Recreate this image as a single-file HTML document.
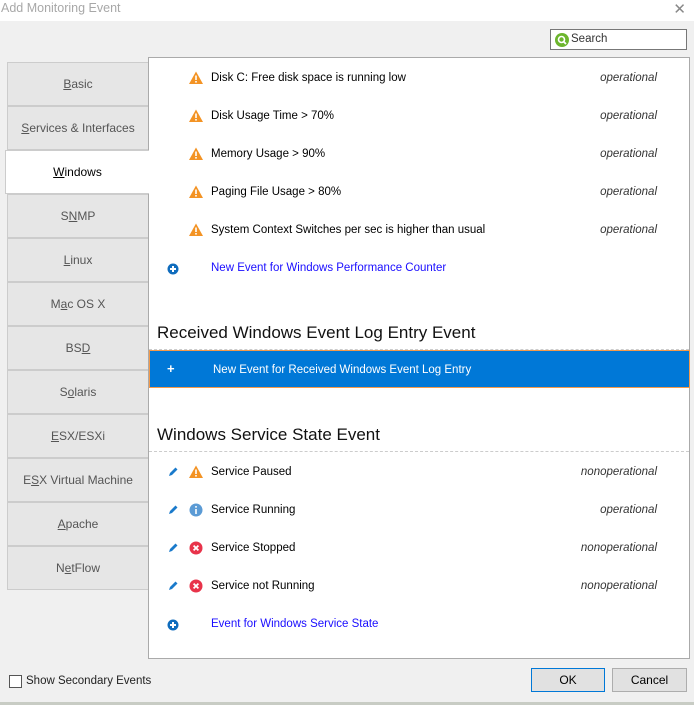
<!DOCTYPE html>
<html><head><meta charset="utf-8"><style>
*{margin:0;padding:0;box-sizing:border-box}
body{width:694px;height:705px;overflow:hidden;background:#f0f0f0;font-family:"Liberation Sans","DejaVu Sans",sans-serif;font-size:11.5px;color:#000;position:relative}
.title{position:absolute;left:0;top:0;width:694px;height:21px;background:#fff;color:#a8a8a8;font-size:12.5px;padding:1px 0 0 1px}
.x{position:absolute;right:8px;top:0px;color:#888;font-size:15px}
.search{position:absolute;left:550px;top:29px;width:137px;height:21px;border:1px solid #777;background:#fff;font-size:11.5px;color:#333;padding:3px 0 0 20px}
.search svg{position:absolute;left:4px;top:3px}
.tab{position:absolute;left:7px;width:141px;height:44px;background:#e6e6e6;border:1px solid #ccc;border-right:none;color:#555;text-align:center;line-height:43px;font-size:12px}
.tab.sel{background:#fff;color:#000;left:5px;width:144px;border-color:#ccc;z-index:2}
.panel{position:absolute;left:148px;top:57px;width:542px;height:602px;background:#fff;border:1px solid #aaa}
.row{position:absolute;left:0;width:540px;height:20px;font-size:11.5px}
.row .ic{position:absolute;left:40px;top:2px}
.row .ed{position:absolute;left:18px;top:3px}
.row .t{position:absolute;left:62px;top:3px}
.row .s{position:absolute;right:32px;top:3px;font-style:italic;color:#333}
.row .t.link{color:#1a0dff}
.hdr{position:absolute;left:8px;font-size:17px;color:#111}
.dash{position:absolute;left:0;width:540px;border-top:1px dashed #ccc}
.blue{position:absolute;left:0;top:292px;width:541px;height:38px;background:#0078d7;border:1px solid #f59a4a;color:#fff}
.btn{position:absolute;top:668px;height:24px;background:#e1e1e1;border:1px solid #adadad;text-align:center;line-height:22px;font-size:12px}
</style></head><body>
<div class="title">Add Monitoring Event<span class="x">✕</span></div>
<div class="search"><svg width="14" height="14" viewBox="0 0 14 14"><circle cx="7" cy="7" r="7" fill="#6cb52d"/><circle cx="6.5" cy="6.5" r="3" fill="none" stroke="#fff" stroke-width="1.6"/><path d="M8.5 8.5L11 11" stroke="#fff" stroke-width="1.8"/></svg>Search</div>

<div class="tab" style="top:62px"><u>B</u>asic</div>
<div class="tab" style="top:106px"><u>S</u>ervices &amp; Interfaces</div>
<div class="tab sel" style="top:150px"><u>W</u>indows</div>
<div class="tab" style="top:194px">S<u>N</u>MP</div>
<div class="tab" style="top:238px"><u>L</u>inux</div>
<div class="tab" style="top:282px">M<u>a</u>c OS X</div>
<div class="tab" style="top:326px">BS<u>D</u></div>
<div class="tab" style="top:370px">S<u>o</u>laris</div>
<div class="tab" style="top:414px"><u>E</u>SX/ESXi</div>
<div class="tab" style="top:458px">E<u>S</u>X Virtual Machine</div>
<div class="tab" style="top:502px"><u>A</u>pache</div>
<div class="tab" style="top:546px">N<u>e</u>tFlow</div>

<div class="panel">
<svg width="0" height="0" style="position:absolute"><defs>
<g id="warn"><path d="M7 0.5L14 13H0Z" fill="#f39324"/><rect x="6.2" y="4.5" width="1.6" height="4.5" fill="#fff"/><rect x="6.2" y="10" width="1.6" height="1.6" fill="#fff"/></g>
<g id="plus"><circle cx="6" cy="6" r="5.5" fill="#0f6cbd"/><path d="M6 3v6M3 6h6" stroke="#fff" stroke-width="2"/></g>
<g id="pen"><path d="M2 10L3 7L8.5 1.5L10.5 3.5L5 9Z" fill="#1a7acb"/></g>
<g id="err"><circle cx="7" cy="7" r="6.5" fill="#e8334a"/><path d="M4.6 4.6L9.4 9.4M9.4 4.6L4.6 9.4" stroke="#fff" stroke-width="1.8"/></g>
<g id="info"><circle cx="7" cy="7" r="6.5" fill="#5b9bd5"/><rect x="6.2" y="6" width="1.6" height="5" fill="#fff"/><rect x="6.2" y="3" width="1.6" height="1.7" fill="#fff"/></g>
</defs></svg>
<div class="row" style="top:11px"><svg class="ic" width="14" height="14"><use href="#warn"/></svg><span class="t">Disk C: Free disk space is running low</span><span class="s">operational</span></div>
<div class="row" style="top:49px"><svg class="ic" width="14" height="14"><use href="#warn"/></svg><span class="t">Disk Usage Time &gt; 70%</span><span class="s">operational</span></div>
<div class="row" style="top:87px"><svg class="ic" width="14" height="14"><use href="#warn"/></svg><span class="t">Memory Usage &gt; 90%</span><span class="s">operational</span></div>
<div class="row" style="top:125px"><svg class="ic" width="14" height="14"><use href="#warn"/></svg><span class="t">Paging File Usage &gt; 80%</span><span class="s">operational</span></div>
<div class="row" style="top:163px"><svg class="ic" width="14" height="14"><use href="#warn"/></svg><span class="t">System Context Switches per sec is higher than usual</span><span class="s">operational</span></div>
<div class="row" style="top:201px"><svg class="ed" width="12" height="12" style="top:4px"><use href="#plus"/></svg><span class="t link">New Event for Windows Performance Counter</span></div>

<div class="hdr" style="top:265px">Received Windows Event Log Entry Event</div>
<div class="dash" style="top:291px"></div>
<div class="blue"><span style="position:absolute;left:17px;top:10px;font-weight:bold;font-size:13px">+</span><span style="position:absolute;left:63px;top:13px">New Event for Received Windows Event Log Entry</span></div>

<div class="hdr" style="top:367px">Windows Service State Event</div>
<div class="dash" style="top:393px"></div>
<div class="row" style="top:405px"><svg class="ed" width="12" height="12"><use href="#pen"/></svg><svg class="ic" width="14" height="14"><use href="#warn"/></svg><span class="t">Service Paused</span><span class="s">nonoperational</span></div>
<div class="row" style="top:443px"><svg class="ed" width="12" height="12"><use href="#pen"/></svg><svg class="ic" width="14" height="14"><use href="#info"/></svg><span class="t">Service Running</span><span class="s">operational</span></div>
<div class="row" style="top:481px"><svg class="ed" width="12" height="12"><use href="#pen"/></svg><svg class="ic" width="14" height="14"><use href="#err"/></svg><span class="t">Service Stopped</span><span class="s">nonoperational</span></div>
<div class="row" style="top:519px"><svg class="ed" width="12" height="12"><use href="#pen"/></svg><svg class="ic" width="14" height="14"><use href="#err"/></svg><span class="t">Service not Running</span><span class="s">nonoperational</span></div>
<div class="row" style="top:557px"><svg class="ed" width="12" height="12" style="top:4px"><use href="#plus"/></svg><span class="t link">Event for Windows Service State</span></div>
</div>

<div style="position:absolute;left:9px;top:675px;width:13px;height:13px;border:1px solid #555;background:#fff"></div>
<div style="position:absolute;left:26px;top:675px;font-size:11.5px;color:#222">Show Secondary Events</div>
<div class="btn" style="left:531px;width:74px;border-color:#0078d7">OK</div>
<div class="btn" style="left:612px;width:75px">Cancel</div>
<div style="position:absolute;left:0;top:702px;width:694px;height:3px;background:#c8ccc4"></div>
</body></html>
